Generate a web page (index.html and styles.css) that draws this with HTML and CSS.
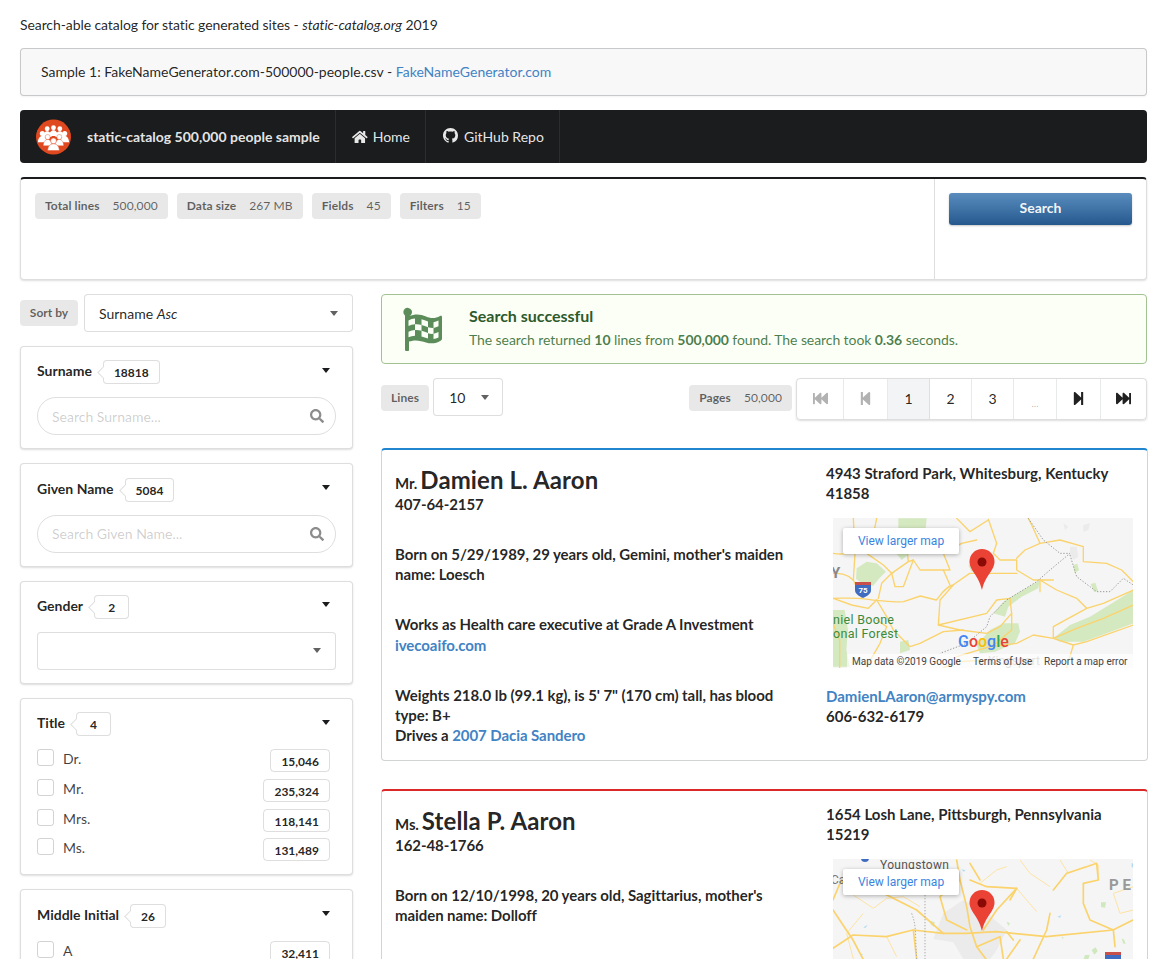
FILE: index.html
```html
<!DOCTYPE html>
<html lang="en">
<head>
<meta charset="utf-8">
<title>static-catalog</title>
<link rel="stylesheet" href="styles.css">
</head>
<body>
<p class="intro">Search-able catalog for static generated sites - <em>static-catalog.org</em> 2019</p>
<div class="sample">Sample 1: FakeNameGenerator.com-500000-people.csv - <a href="#">FakeNameGenerator.com</a></div>

<nav class="menu">
  <div class="menu-item brand">
    <svg class="logo" viewBox="0 0 36 36">
      <circle cx="18" cy="18" r="18" fill="#e0481f"/>
      <g fill="#fff">
        <circle cx="11.500" cy="9.500" r="2.500"/><circle cx="18" cy="8.500" r="2.500"/><circle cx="24.500" cy="9.500" r="2.500"/>
        <path d="M7 18c0-3.500 2-6 4.500-6s4.500 2.500 4.500 6zM13.500 17c0-3.500 2-6 4.500-6s4.500 2.500 4.500 6zM20 18c0-3.500 2-6 4.500-6s4.500 2.500 4.500 6z"/>
        <circle cx="6.500" cy="14.500" r="2.600"/><circle cx="29.500" cy="14.500" r="2.600"/>
        <path d="M2 23.500c0-3.800 2-6.500 4.500-6.500s4.500 2.700 4.500 6.500zM25 23.500c0-3.800 2-6.500 4.500-6.500s4.500 2.700 4.500 6.500z"/>
        <circle cx="12" cy="18" r="2.600" stroke="#e0481f" stroke-width=".4"/><circle cx="24" cy="18" r="2.600" stroke="#e0481f" stroke-width=".4"/>
        <path d="M7.500 27c0-3.800 2-6.500 4.500-6.500s4.500 2.700 4.500 6.500zM19.500 27c0-3.800 2-6.500 4.500-6.500s4.500 2.700 4.500 6.500z" stroke="#e0481f" stroke-width=".4"/>
        <circle cx="18" cy="22" r="3" stroke="#e0481f" stroke-width=".5"/>
        <path d="M12 32c0-4.200 2.600-7 6-7s6 2.800 6 7z" stroke="#e0481f" stroke-width=".5"/>
      </g>
    </svg>
    <b>static-catalog 500,000 people sample</b>
  </div>
  <a class="menu-item link" href="#">
    <svg class="ico-home" viewBox="0 0 576 512"><path fill="currentColor" d="M280.37 148.26L96 300.11V464a16 16 0 0 0 16 16l112.06-.29a16 16 0 0 0 15.92-16V368a16 16 0 0 1 16-16h64a16 16 0 0 1 16 16v95.64a16 16 0 0 0 16 16.05L464 480a16 16 0 0 0 16-16V300L295.67 148.26a12.19 12.19 0 0 0-15.3 0zM571.6 251.47L488 182.56V44.05a12 12 0 0 0-12-12h-56a12 12 0 0 0-12 12v72.61L318.47 43a48 48 0 0 0-61 0L4.34 251.47a12 12 0 0 0-1.6 16.9l25.5 31A12 12 0 0 0 45.15 301l235.22-193.74a12.19 12.19 0 0 1 15.3 0L530.9 301a12 12 0 0 0 16.9-1.6l25.5-31a12 12 0 0 0-1.7-16.93z"/></svg>
    Home
  </a>
  <a class="menu-item link gh" href="#">
    <svg class="ico-gh" viewBox="0 0 16 16"><path fill="currentColor" d="M8 0C3.58 0 0 3.58 0 8c0 3.54 2.29 6.53 5.47 7.59.4.07.55-.17.55-.38 0-.19-.01-.82-.01-1.49-2.01.37-2.53-.49-2.69-.94-.09-.23-.48-.94-.82-1.13-.28-.15-.68-.52-.01-.53.63-.01 1.08.58 1.23.82.72 1.21 1.87.87 2.33.66.07-.52.28-.87.51-1.07-1.78-.2-3.64-.89-3.64-3.95 0-.87.31-1.59.82-2.15-.08-.2-.36-1.02.08-2.12 0 0 .67-.21 2.2.82.64-.18 1.32-.27 2-.27.68 0 1.36.09 2 .27 1.53-1.04 2.2-.82 2.2-.82.44 1.1.16 1.92.08 2.12.51.56.82 1.27.82 2.15 0 3.07-1.87 3.75-3.65 3.95.29.25.54.73.54 1.48 0 1.07-.01 1.93-.01 2.2 0 .21.15.46.55.38A8.013 8.013 0 0016 8c0-4.420-3.580-8-8-8z"/></svg>
    GitHub Repo
  </a>
</nav>

<section class="summary">
  <div class="stats">
    <span class="tag">Total lines<i>500,000</i></span>
    <span class="tag">Data size<i>267 MB</i></span>
    <span class="tag">Fields<i>45</i></span>
    <span class="tag">Filters<i>15</i></span>
  </div>
  <div class="search-col"><button class="search-btn" type="button">Search</button></div>
</section>

<div class="columns">
  <aside class="sidebar">
    <div class="sort-row">
      <span class="tag">Sort by</span>
      <div class="select grow"><span class="select-text">Surname <em>Asc</em></span><span class="caret muted"></span></div>
    </div>

    <div class="facet">
      <div class="facet-head"><b>Surname</b><span class="count">18818</span><span class="caret dark"></span></div>
      <div class="search-input"><span>Search Surname...</span>
        <svg class="ico-search" viewBox="0 0 512 512"><path fill="currentColor" d="M505 442.7L405.3 343c-4.500-4.500-10.600-7-17-7H372c27.600-35.300 44-79.700 44-128C416 93.100 322.900 0 208 0S0 93.100 0 208s93.100 208 208 208c48.300 0 92.700-16.400 128-44v16.300c0 6.400 2.500 12.500 7 17l99.700 99.700c9.400 9.400 24.600 9.400 33.900 0l28.300-28.300c9.400-9.400 9.400-24.600.1-34zM208 336c-70.700 0-128-57.200-128-128 0-70.700 57.200-128 128-128 70.700 0 128 57.200 128 128 0 70.700-57.200 128-128 128z"/></svg>
      </div>
    </div>

    <div class="facet">
      <div class="facet-head"><b>Given Name</b><span class="count">5084</span><span class="caret dark"></span></div>
      <div class="search-input"><span>Search Given Name...</span>
        <svg class="ico-search" viewBox="0 0 512 512"><path fill="currentColor" d="M505 442.7L405.3 343c-4.500-4.500-10.600-7-17-7H372c27.600-35.300 44-79.700 44-128C416 93.100 322.900 0 208 0S0 93.100 0 208s93.100 208 208 208c48.300 0 92.700-16.400 128-44v16.300c0 6.400 2.500 12.500 7 17l99.700 99.700c9.400 9.400 24.600 9.400 33.900 0l28.300-28.300c9.400-9.400 9.400-24.600.1-34zM208 336c-70.700 0-128-57.200-128-128 0-70.700 57.200-128 128-128 70.700 0 128 57.200 128 128 0 70.700-57.200 128-128 128z"/></svg>
      </div>
    </div>

    <div class="facet">
      <div class="facet-head"><b>Gender</b><span class="count">2</span><span class="caret dark"></span></div>
      <div class="select"><span></span><span class="caret muted"></span></div>
    </div>

    <div class="facet">
      <div class="facet-head"><b>Title</b><span class="count">4</span><span class="caret dark"></span></div>
      <ul class="checks">
        <li><span class="box"></span><span class="check-name">Dr.</span><span class="num">15,046</span></li>
        <li><span class="box"></span><span class="check-name">Mr.</span><span class="num">235,324</span></li>
        <li><span class="box"></span><span class="check-name">Mrs.</span><span class="num">118,141</span></li>
        <li><span class="box"></span><span class="check-name">Ms.</span><span class="num">131,489</span></li>
      </ul>
    </div>

    <div class="facet">
      <div class="facet-head"><b>Middle Initial</b><span class="count">26</span><span class="caret dark"></span></div>
      <ul class="checks">
        <li><span class="box"></span><span class="check-name">A</span><span class="num">32,411</span></li>
      </ul>
    </div>
  </aside>

  <main class="results">
    <div class="message">
      <svg class="ico-flag" viewBox="0 0 44 44">
        <path fill="#5b8c5a" d="M5 8.500A4.300 4.300 0 1 1 9 9.200c6-2.700 12-2 17 .3 4.500 2 9.500 2.200 14-.6 1-.6 2-.1 2 1v21.600c0 1-.4 1.500-1 1.900-4.500 3-10 3.600-15 2-5-1.600-10.500-3.200-17-.8v8.400c0 .8-.5 1.200-1.200 1.200H6.200C5.500 44 5 43.500 5 42.800z"/>
        <path fill="#fcfff5" d="M8.500 13.500c2-1.200 4.200-1.800 6.500-2v5.800c-2.300.2-4.500.8-6.500 1.700zM21.500 12.200c2.200.6 4.300 1.500 6.500 2.200v5.800c-2.200-.6-4.300-1.400-6.500-2.100zM33.500 15.200c1.700-.2 3.300-.8 5-1.700v5.800c-1.700.9-3.300 1.400-5 1.700zM15 17.300c2.200-.3 4.400 0 6.500.8v5.700c-2.100-.7-4.300-1-6.500-.8zM28 20.200c1.900.5 3.700.9 5.500.8v5.800c-1.800.3-3.600 0-5.500-.6zM8.500 24.800c2-.9 4.200-1.500 6.500-1.700v5.600c-2.300.2-4.500.7-6.500 1.500zM21.500 23.800c2.200.7 4.300 1.500 6.500 2.200v5.600c-2.200-.5-4.300-1.300-6.500-2zM33.500 26.800c1.700-.2 3.300-.8 5-1.700v5.300c-1.700.8-3.300 1.400-5 1.700z"/>
      </svg>
      <div class="message-text">
        <h3>Search successful</h3>
        <p>The search returned <b>10</b> lines from <b>500,000</b> found. The search took <b>0.36</b> seconds.</p>
      </div>
    </div>

    <div class="controls">
      <span class="tag">Lines</span>
      <div class="select lines"><span class="select-text">10</span><span class="caret muted"></span></div>
      <span class="tag pages">Pages<i>50,000</i></span>
      <div class="pager">
        <span class="pg ico w47 off"><svg viewBox="0 0 512 512"><path fill="currentColor" d="M0 436V76c0-6.600 5.400-12 12-12h40c6.600 0 12 5.400 12 12v151.900L235.500 71.400C256.100 54.300 288 68.600 288 96v131.900L459.500 71.400C480.100 54.300 512 68.600 512 96v320c0 27.400-31.900 41.700-52.500 24.600L288 285.300V416c0 27.400-31.900 41.700-52.500 24.600L64 285.300V436c0 6.600-5.400 12-12 12H12c-6.600 0-12-5.400-12-12z"/></svg></span>
        <span class="pg ico w44 off"><svg viewBox="0 0 448 512"><path fill="currentColor" d="M64 468V44c0-6.600 5.400-12 12-12h48c6.600 0 12 5.400 12 12v176.400l195.500-181C352.100 22.300 384 36.600 384 64v384c0 27.400-31.900 41.700-52.500 24.600L136 292.700V468c0 6.600-5.400 12-12 12H76c-6.600 0-12-5.400-12-12z"/></svg></span>
        <span class="pg w42 current">1</span>
        <span class="pg w42">2</span>
        <span class="pg w42">3</span>
        <span class="pg w43 dots">...</span>
        <span class="pg ico w44"><svg viewBox="0 0 448 512"><path fill="currentColor" d="M384 44v424c0 6.600-5.400 12-12 12h-48c-6.600 0-12-5.400-12-12V291.600l-195.500 181C95.900 489.700 64 475.400 64 448V64c0-27.400 31.900-41.700 52.500-24.600L312 219.300V44c0-6.600 5.400-12 12-12h48c6.600 0 12 5.400 12 12z"/></svg></span>
        <span class="pg ico w45"><svg viewBox="0 0 512 512"><path fill="currentColor" d="M512 76v360c0 6.600-5.400 12-12 12h-40c-6.600 0-12-5.400-12-12V284.100L276.500 440.600c-20.600 17.200-52.500 2.800-52.500-24.600V284.100L52.500 440.600C31.900 457.800 0 443.400 0 416V96c0-27.400 31.900-41.700 52.500-24.600L224 226.800V96c0-27.400 31.900-41.700 52.500-24.600L448 226.800V76c0-6.600 5.400-12 12-12h40c6.600 0 12 5.400 12 12z"/></svg></span>
      </div>
    </div>

    <article class="person blue">
      <div class="person-main">
        <h2><small>Mr.</small>Damien L. Aaron</h2>
        <p class="first">407-64-2157</p>
        <p>Born on 5/29/1989, 29 years old, Gemini, mother's maiden name: Loesch</p>
        <p>Works as Health care executive at Grade A Investment<br><a class="site" href="#">ivecoaifo.com</a></p>
        <p>Weights 218.0 lb (99.1 kg), is 5' 7" (170 cm) tall, has blood type: B+<br>Drives a <a class="car" href="#">2007 Dacia Sandero</a></p>
      </div>
      <div class="person-side">
        <p>4943 Straford Park, Whitesburg, Kentucky 41858</p>
        <div class="map">
          <svg viewBox="0 0 300 150" width="300" height="150">
            <rect width="300" height="150" fill="#f5f5f5"/>
            <g transform="translate(-13 -8) scale(.33333)">
              <g fill="#d5e9c0">
                <path d="M110 175l30-20 30 5 28 25-20 20-18 22-30-5-22-15z"/>
                <path d="M235 25h85l-5 50-30 30-15 25-25 20-20-25 10-50z"/>
                <path d="M39 300h35l10 60-5 60 10 50H39z"/>
                <path d="M520 310l30-35 50-30 60-35-5 25-50 25-40 30-10 30z"/>
                <path d="M470 405l40-45 40-20 45 0 5 25-15 35-60 25-45 5z"/>
                <path d="M700 385l50-40 60-25 130-80v100l-80 30-70 25-70 0z"/>
                <path d="M812 222l14-4 8 24-12 4z"/>
                <path d="M760 165l12-4 5 20-14 8z"/>
                <path d="M445 165l20-5 5 20-15 5z"/>
                <path d="M240 395l25-5 5 30-30 10z"/>
              </g>
              <g fill="#ebebeb">
                <path d="M750 110l20 0 5 30-15 10-10-15zM790 45l20-5-5 20-15 5zM730 40l15 10-10 10z"/>
              </g>
              <g fill="none" stroke="#fbd36c" stroke-width="4" stroke-linejoin="round" stroke-linecap="round">
                <path d="M39 265c25-2 45 0 70 0s40 5 62 6c25 2 55 6 80 4l50-17 48 12c15-18 28-40 50-45l50-35h22l50 0 70 0"/>
                <path d="M505 28l25 72-10 30 20 20h50v30l50 30h60"/>
                <path d="M590 145l25-25 45-20 60-10 70 20v45l70 5 45 20 35 35"/>
                <path d="M660 210l50 30 60 25 30 30 50-15 90-40"/>
                <path d="M800 295l-100 55v35l70-30 80-30 90-40"/>
                <path d="M355 345l145-35 30-40 40-5 5 45-35 40-40 20-80-10-65-15z"/>
                <path d="M355 345l5-75 40-45"/>
                <path d="M215 190l50-35 15-5 20 30h70l20 45"/>
                <path d="M215 190l10 40h25l30-80"/>
                <path d="M100 25l5 105-5 80 25 55"/>
                <path d="M170 270l30 50 20 40 50 50 30-10 70-35 60-5"/>
                <path d="M410 25l40 40 55-35"/>
                <path d="M370 130l20 50-20 0"/>
                <path d="M265 155l-5-50 50-20 30 20 30 25 55-30 45-10"/>
                <path d="M410 440l100-30 80-10 50-25 60 10 60 20 40-10 140-50"/>
                <path d="M760 405l-20 68"/>
                <path d="M39 190c20 0 40 0 60 20M39 340l20 50 0 83M170 270l-25 25-50-10-55-20"/>
                <path d="M170 330l30 20-20 50-40 70"/>
                <path d="M660 210l0 35"/>
                <path d="M575 310l0 50-60 50"/>
                <path d="M500 450l-80 5-50 18"/>
                <path d="M170 25l-10 50-35 30-20 25"/>
                <path d="M215 190l-30 30-10 45"/>
                <path d="M39 130c25 5 45 0 65 0M140 130l50 35 25 25"/>
                <path d="M660 100l-25-55-10-20"/>
              </g>
              <g fill="none" stroke="#999" stroke-width="3" stroke-dasharray="4 5">
                <path d="M625 25l45 65 50 40h30l-60 50-40 35-90 55-50 50-10 30-60 50-80 30"/>
                <path d="M750 135l20 65 60 45h40l40-40 30 20"/>
              </g>
            </g>
            <text class="map-grey" x="-2" y="60">Y</text>
            <text class="map-green" x="0" y="106">niel Boone</text>
            <text class="map-green" x="0" y="120">onal Forest</text>
            <path d="M22 64h16v8c0 4-4 6-8 8-4-2-8-4-8-8z" fill="#3f6cc0"/>
            <path d="M22 64h16v3H22z" fill="#c9504a"/>
            <text class="map-shield" x="30" y="75" text-anchor="middle">75</text>
            <text class="map-grey2" x="155" y="147">Kingsport</text>
            <rect x="14" y="136" width="286" height="14" fill="#fff" opacity=".65"/>
            <text class="map-google" x="125" y="129"><tspan fill="#4285f4">G</tspan><tspan fill="#ea4335">o</tspan><tspan fill="#fbbc05">o</tspan><tspan fill="#4285f4">g</tspan><tspan fill="#34a853">l</tspan><tspan fill="#ea4335">e</tspan></text>
            <text class="map-small" x="19" y="147">Map data ©2019 Google</text>
            <text class="map-small" x="140" y="147">Terms of Use</text>
            <text class="map-small" x="211" y="147">Report a map error</text>
            <path d="M149 31c-7 0-12.500 5.500-12.500 12.500 0 9 9.500 14 12.500 28.500 3-14.500 12.500-19.500 12.500-28.500C161.500 36.500 156 31 149 31z" fill="#ea4335"/>
            <circle cx="149" cy="44" r="4.500" fill="#8c0a06"/>
          </svg>
          <span class="larger">View larger map</span>
        </div>
        <p class="contact"><a href="#">DamienLAaron@armyspy.com</a><br>606-632-6179</p>
      </div>
    </article>

    <article class="person red">
      <div class="person-main">
        <h2><small>Ms.</small>Stella P. Aaron</h2>
        <p class="first">162-48-1766</p>
        <p>Born on 12/10/1998, 20 years old, Sagittarius, mother's maiden name: Dolloff</p>
      </div>
      <div class="person-side">
        <p>1654 Losh Lane, Pittsburgh, Pennsylvania 15219</p>
        <div class="map">
          <svg viewBox="0 0 300 150" width="300" height="150">
            <rect width="300" height="150" fill="#f5f5f5"/>
            <g transform="translate(-13 -79) scale(.33333)">
              <path d="M370 400l60-40 60 30 70 60-30 60-20 27h-80l-30-50-60-10z" fill="#ebebeb"/>
              <g fill="#cfe8bd">
                <path d="M843 367l15 0-3 16-12-2zM332 422l12 5-2 14-10-8zM815 510l12-8 6 12-10 10zM795 525l14 0-4 12h-14zM905 475l8 5 4 12-8-2zM725 468l6 6-4 3zM560 425l10 5-5 8z"/>
              </g>
              <g fill="#aedcf5">
                <path d="M130 442l14-8-8 10zM425 268l12 3-6 4zM712 410l12-4-4 7zM120 520l10 4-8 2zM935 250h5v12h-5z"/>
              </g>
              <g fill="none" stroke="#fde3a4" stroke-width="3" stroke-linejoin="round">
                <path d="M100 345l60 40 40-30 50-5 50 30"/>
                <path d="M480 310l50-40 30-10"/>
                <path d="M720 240l25 40 50-20"/>
                <path d="M590 325l60 70"/>
                <path d="M810 240l25 15 0 45"/>
                <path d="M130 400l-50 60 20 77"/>
                <path d="M200 470l30 60"/>
                <path d="M600 240l30 40 60 40"/>
                <path d="M880 340l60-20"/>
                <path d="M880 340l20 60 40-10"/>
              </g>
              <g fill="none" stroke="#fbd36c" stroke-width="5" stroke-linejoin="round" stroke-linecap="round">
                <path d="M39 505l60-40 100 5 80-20 90 10 70 0 90-5 150 15 200-20 60-30"/>
                <path d="M410 240l10 60 20 80 10 60 20 60 30 40"/>
                <path d="M450 300l50 20 90 5-60 65-40 60"/>
                <path d="M700 330l40-50 60-20 30-10 5 50-45 10 0 60 20 50 70 30 5 50"/>
                <path d="M590 325l-20 35"/>
                <path d="M690 400l-10 50-40 87"/>
                <path d="M190 340l100 50 80 70"/>
                <path d="M39 390l60 90 30 57"/>
                <path d="M420 300l-60 50 20 70 60 30"/>
                <path d="M600 480l-40 57"/>
                <path d="M470 500l70-30 10 67"/>
                <path d="M450 250l30 50"/>
                <path d="M39 360l25-60 30 40"/>
                <path d="M280 450l10 87"/>
                <path d="M580 480l-20-25"/>
              </g>
              <g fill="none" stroke="#aaa" stroke-width="3" stroke-dasharray="4 5">
                <path d="M315 345v192"/>
                <path d="M275 400c15 40 10 60 15 137"/>
              </g>
            </g>
            <text class="map-town" x="47" y="10">Youngstown</text>
            <text class="map-grey3" x="-2" y="25">Ca</text>
            <text class="map-state" x="276" y="31">P E</text>
            <circle cx="32" cy="-1" r="4" fill="#3f6cc0"/>
            <path d="M272 93h16v5h-16z" fill="#c9504a"/>
            <path d="M272 96h16v6h-16z" fill="#3f6cc0"/>
            <path d="M149 31c-7 0-12.500 5.500-12.500 12.500 0 9 9.500 14 12.500 28.500 3-14.500 12.500-19.500 12.500-28.500C161.500 36.500 156 31 149 31z" fill="#ea4335"/>
            <circle cx="149" cy="44" r="4.500" fill="#8c0a06"/>
          </svg>
          <span class="larger">View larger map</span>
        </div>
      </div>
    </article>
  </main>
</div>
</body>
</html>
```
FILE: styles.css
```css
* { box-sizing: border-box; }
html, body { height: 959px; overflow: hidden; }
body {
  margin: 0;
  padding: 15px 20px 0;
  background: #fff;
  color: rgba(0,0,0,.87);
  font: 14px/20px Lato, "Liberation Sans", sans-serif;
}
a { color: #4183c4; text-decoration: none; }
p { margin: 0; }
.intro { margin-bottom: 13px; letter-spacing: -.085px; }

.sample {
  height: 48px;
  padding: 13px 20px;
  border: 1px solid rgba(34,36,38,.22);
  border-radius: 4px;
  background: #f8f8f9;
  box-shadow: 0 1px 2px rgba(34,36,38,.06);
}

.menu {
  display: flex;
  height: 53px;
  margin-top: 14px;
  background: #1b1c1d;
  border-radius: 4px;
  color: rgba(255,255,255,.9);
}
.menu-item {
  display: flex;
  align-items: center;
  border-right: 1px solid rgba(255,255,255,.08);
}
.brand { width: 316px; padding-left: 16px; }
.brand b { margin-left: 16px; }
.logo { width: 35px; height: 36px; }
.link { color: rgba(255,255,255,.9); padding: 0 15px 0 16px; width: 90px; }
.gh { width: 134px; padding-left: 17px; }
.ico-home { width: 16px; height: 14px; margin-right: 5px; }
.ico-gh { width: 15px; height: 15px; margin-right: 6px; margin-top: -3px; }

.summary {
  display: flex;
  height: 103px;
  margin-top: 14px;
  border: 1px solid rgba(34,36,38,.15);
  border-top: 2px solid #1b1c1d;
  border-radius: 4px;
  box-shadow: 0 1px 2px rgba(34,36,38,.15);
}
.stats { flex: 1; display: flex; align-items: flex-start; gap: 9px; padding: 14px; }
.search-col { width: 212px; padding: 14px; border-left: 1px solid rgba(34,36,38,.15); }
.search-btn {
  display: block;
  width: 183px;
  height: 32px;
  padding: 0 0 2px;
  border: 0;
  border-radius: 3px;
  background: linear-gradient(#5a8dbe, #25588d);
  color: rgba(255,255,255,.95);
  font: 700 14px/20px Lato, sans-serif;
  box-shadow: 0 1px 2px rgba(34,36,38,.25);
}

.tag {
  display: inline-block;
  height: 26px;
  padding: 0 10px;
  border-radius: 4px;
  background: #e8e8e8;
  color: rgba(0,0,0,.6);
  font-size: 12px;
  font-weight: 700;
  line-height: 26px;
  letter-spacing: .1px;
  white-space: nowrap;
}
.tag i { margin-left: 13px; font-style: normal; font-weight: 400; }

.columns { display: flex; gap: 28px; margin-top: 14px; }
.sidebar { width: 333px; flex: none; }
.results { width: 766px; flex: none; }

.sort-row { display: flex; align-items: center; gap: 6px; margin-bottom: 14px; }
.sort-row .tag { width: 58px; padding: 0; text-align: center; letter-spacing: 0; }

.select {
  display: flex;
  align-items: center;
  justify-content: space-between;
  height: 38px;
  padding: 0 14px 0 14px;
  border: 1px solid rgba(34,36,38,.15);
  border-radius: 4px;
  background: #fff;
}
.select-text { padding-top: 1px; }
.grow { flex: 1; }
.caret { width: 0; height: 0; border-style: solid; border-color: transparent; border-width: 5px 4px 0; }
.caret.muted { border-top-color: rgba(0,0,0,.62); }
.caret.dark { border-top-color: #1b1c1d; margin-left: auto; margin-top: -4px; }

.facet {
  margin-bottom: 14px;
  padding: 13.33px 16px 13px;
  border: 1px solid rgba(34,36,38,.15);
  border-radius: 4px;
  box-shadow: 0 1px 2px rgba(34,36,38,.15);
  background: #fff;
}
.facet-head { display: flex; align-items: center; height: 24px; margin-bottom: 13px; padding-right: 6px; }
.facet-head b { margin-right: 11px; padding-bottom: 2px; }
.count {
  position: relative;
  min-width: 35px;
  height: 24px;
  padding: 0 10px;
  border: 1px solid rgba(34,36,38,.15);
  border-radius: 4px;
  background: #fff;
  font-size: 12px;
  font-weight: 700;
  line-height: 23px;
  text-align: center;
}
.count::before {
  content: "";
  position: absolute;
  left: -5px;
  top: 7px;
  width: 8px;
  height: 8px;
  background: #fff;
  border-left: 1px solid rgba(34,36,38,.15);
  border-bottom: 1px solid rgba(34,36,38,.15);
  transform: rotate(45deg);
}

.search-input {
  display: flex;
  align-items: center;
  justify-content: space-between;
  height: 38px;
  padding: 0 11px 0 14px;
  border: 1px solid rgba(34,36,38,.15);
  border-radius: 19px;
  color: rgba(0,0,0,.2);
}
.search-input span { padding-top: 1px; }
.ico-search { width: 14px; height: 14px; color: #8c8c8c; }

.checks { list-style: none; margin: 1px 0 0; padding: 0 6px 0 0; display: flex; flex-direction: column; gap: 6.7px; }
.checks li { display: flex; align-items: flex-start; height: 23px; }
.box { width: 17px; height: 17px; border: 1px solid rgba(34,36,38,.2); border-radius: 3px; }
.check-name { margin-left: 9px; color: rgba(0,0,0,.75); }
.num {
  margin-left: auto;
  min-width: 60px;
  height: 23px;
  padding: 0 10px;
  border: 1px solid rgba(34,36,38,.15);
  border-radius: 4px;
  font-size: 12px;
  font-weight: 700;
  line-height: 23px;
  text-align: right;
}

.message {
  display: flex;
  align-items: center;
  height: 70px;
  padding: 0 18px;
  border: 1px solid #a3c293;
  border-radius: 4px;
  background: #fcfff5;
  color: #2c662d;
}
.ico-flag { width: 44px; height: 44px; margin-right: 25px; }
.message-text { color: rgba(44,102,45,.85); margin-top: -2px; letter-spacing: -.08px; }
.message h3 { margin: 0 0 4px; font-size: 16px; line-height: 20px; font-weight: 700; color: #2c5a2d; letter-spacing: 0; }

.controls { display: flex; align-items: center; height: 42px; margin-top: 14px; }
.controls .tag { margin-top: -3px; }
.lines { width: 70px; margin: -4px 0 0 4px; padding: 0 13px 0 15px; }
.pages { margin-left: auto; margin-right: 4px; }
.pager {
  display: flex;
  height: 42px;
  border: 1px solid rgba(34,36,38,.15);
  border-radius: 4px;
  box-shadow: 0 1px 2px rgba(34,36,38,.15);
}
.pg {
  display: flex;
  align-items: center;
  justify-content: center;
  border-right: 1px solid rgba(34,36,38,.1);
}
.pg:last-child { border-right: 0; }
.pg svg { width: 15px; height: 15px; margin-top: -2px; }
.off { color: rgba(0,0,0,.3); }
.current { background: #f3f4f5; }
.dots { color: rgba(0,0,0,.3); font-size: 10px; padding-top: 8px; }
.w42 { width: 42px; }
.w43 { width: 43px; }
.w44 { width: 44px; }
.w45 { width: 45px; }
.w47 { width: 47px; }

.person {
  display: flex;
  gap: 31px;
  width: 767px;
  margin-top: 28px;
  padding: 13px 14px 15px 13px;
  border: 1px solid rgba(34,36,38,.2);
  border-top-width: 2px;
  border-top-style: solid;
  border-radius: 4px;
  background: #fff;
  font-size: 15px;
  font-weight: 700;
}
.person.blue { border-top-color: #2185d0; }
.person.red { border-top-color: #db2828; }
.person-main { width: 400px; flex: none; letter-spacing: -.07px; }
.person-side { flex: 1; }
.person h2 { margin: 3px 0 1px; font-size: 24px; line-height: 27px; font-weight: 700; letter-spacing: .1px; }
.person h2 small { margin-right: 3px; font-size: 15px; font-weight: 700; line-height: 1; letter-spacing: -.1px; }
.person-main p { margin-top: 30px; }
.person-main p.first { margin-top: 0; }
.site { display: inline-block; padding-top: 1px; }
.person-side .map { margin: 15px 0 18px 7px; }
.map { position: relative; width: 300px; height: 150px; }
.map svg { display: block; }
.larger {
  position: absolute;
  left: 10px;
  top: 10px;
  width: 116px;
  height: 26px;
  background: #fff;
  border-radius: 2px;
  box-shadow: 0 1px 4px rgba(0,0,0,.3);
  color: #3a84df;
  font: 400 12px/26px Roboto, sans-serif;
  text-align: center;
}

.map-small { font: 400 10px Roboto, sans-serif; fill: #444; }
.map-grey { font: 700 15px Roboto, sans-serif; fill: #888; }
.map-grey2 { font: 400 12px Roboto, sans-serif; fill: #aaa; }
.map-grey3 { font: 400 12px Roboto, sans-serif; fill: #777; }
.map-town { font: 400 12px Roboto, sans-serif; fill: #555; letter-spacing: .3px; }
.map-state { font: 700 15px Roboto, sans-serif; fill: #999; }
.map-green { font: 400 12.500px Roboto, sans-serif; fill: #3c8a3e; letter-spacing: .3px; }
.map-shield { font: 700 8px Roboto, sans-serif; fill: #fff; }
.map-google { font: 500 16px Roboto, sans-serif; }
```
